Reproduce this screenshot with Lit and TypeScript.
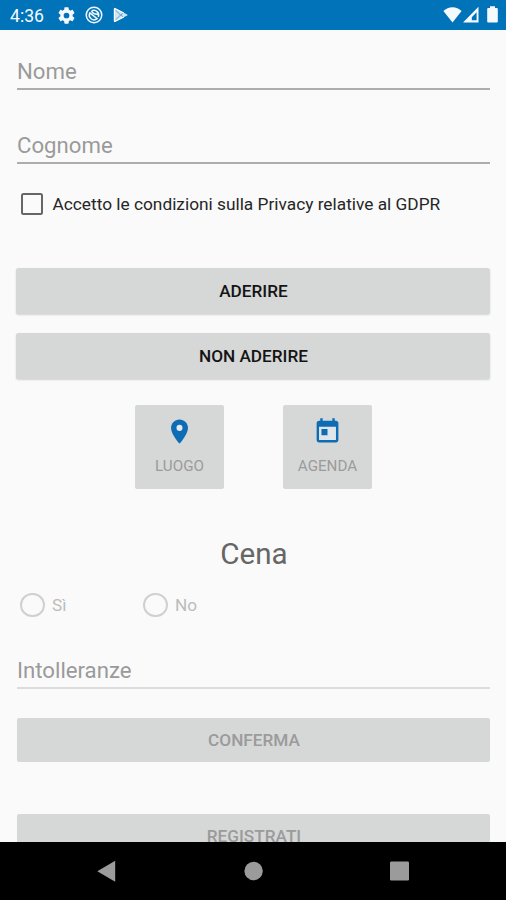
import { LitElement, html, css } from "lit";
import { customElement, property } from "lit/decorators.js";

@customElement("status-bar")
class StatusBar extends LitElement {
  static styles = css`
    :host { display: flex; align-items: center; height: 29.5px; background: #0073b9; color: #f4faff; flex: none; }
    .clock { width: 48px; margin-left: 10px; font-size: 17.6px; line-height: 30px; padding-top: 2px; box-sizing: border-box; white-space: nowrap; font-weight: 400; }
    svg { display: block; flex: none; fill: #f4faff; }
    .gear { width: 17px; height: 17px; margin-top: 1px; }
    .ring { width: 18px; height: 18px; margin: 1px 0 0 9.5px; }
    .play { width: 16px; height: 16px; margin: 1px 0 0 10px; }
    .space { flex: 1; }
    .wifi { width: 19px; height: 17px; }
    .signal { width: 16px; height: 17px; margin-left: 1px; }
    .battery { width: 11px; height: 17px; margin: 0 8px 0 8.5px; }
  `;
  render() {
    return html`
      <span class="clock">4:36</span>
      <svg class="gear" viewBox="1.6 2 20.8 20"><path d="M19.43 12.98c.04-.32.07-.64.07-.98s-.03-.66-.07-.98l2.11-1.65c.19-.15.24-.42.12-.64l-2-3.46c-.12-.22-.39-.3-.61-.22l-2.49 1c-.52-.4-1.08-.73-1.69-.98l-.38-2.65A.49.49 0 0 0 14 2h-4c-.25 0-.46.18-.49.42l-.38 2.65c-.61.25-1.17.59-1.69.98l-2.49-1c-.23-.09-.49 0-.61.22l-2 3.46c-.13.22-.07.49.12.64l2.11 1.65c-.04.32-.07.65-.07.98s.03.66.07.98l-2.11 1.65c-.19.15-.24.42-.12.64l2 3.46c.12.22.39.3.61.22l2.49-1c.52.4 1.08.73 1.69.98l.38 2.65c.03.24.24.42.49.42h4c.25 0 .46-.18.49-.42l.38-2.65c.61-.25 1.17-.59 1.69-.98l2.49 1c.23.09.49 0 .61-.22l2-3.46c.12-.22.07-.49-.12-.64zM12 15.5a3.5 3.5 0 1 1 0-7 3.5 3.5 0 0 1 0 7z"/></svg>
      <svg class="ring" viewBox="0 0 19 19"><g fill="none" stroke="#f4faff" stroke-width="1.6"><circle cx="9.5" cy="9.5" r="8.2"/><path d="M5.2 7.2a5 5 0 0 0 7.6 6.2zM7 5.2a5 5 0 0 1 7 6.3M7 5.2q1.3 3.6 6.6 3.4"/></g></svg>
      <svg class="play" viewBox="0 0 16 17"><path d="M1.2 1.2Q.5 1 .5 2v13q0 1 .8.8L14.6 9q.9-.5 0-1z" opacity=".85"/><path d="M2.3 3.5 7.6 8.5 2.3 13.5M7.6 8.5l3-2.1M7.6 8.5l3 2.1" fill="none" stroke="#0073b9" stroke-width=".6"/><path d="M1 1.6v13.8M1 1.4l10 4.9M1 15.6l10-4.9" fill="none" stroke="#fff" stroke-width="1.2"/></svg>
      <span class="space"></span>
      <svg class="wifi" viewBox="0 0 19 17"><path d="M9.5 16.5.4 5.1Q4.2 1.3 9.5 1.3t9.1 3.8z"/></svg>
      <svg class="signal" viewBox="0 0 16 17"><path fill-rule="evenodd" d="M0 16.5 15.5.8v15.7zM8.8 14.3h4.8V6.2l-4.8 5z"/></svg>
      <svg class="battery" viewBox="0 0 11 17"><path d="M3 .3h5v1.8h1.8q1 0 1 1v12.4q0 1-1 1H1.2q-1 0-1-1V3.1q0-1 1-1H3z"/></svg>
    `;
  }
}

@customElement("text-field")
class TextField extends LitElement {
  @property() label = "";
  @property({ type: Boolean, reflect: true }) disabled = false;
  static styles = css`
    :host { display: block; box-sizing: border-box; height: 37px; margin: 0 16px 0 17px; border-bottom: 2px solid #adadad; font-size: 22.2px; line-height: 36px; color: #9a9a9a; white-space: nowrap; }
    :host([disabled]) { border-color: #dcdcdc; }
  `;
  render() { return html`${this.label}`; }
}

@customElement("form-button")
class FormButton extends LitElement {
  @property({ type: Boolean, reflect: true }) disabled = false;
  static styles = css`
    :host { display: flex; align-items: center; justify-content: center; height: 45.5px; margin: 0 16px; border-radius: 2.5px; background: #d6d7d7; color: #141414; font-size: 17.2px; font-weight: 500; box-shadow: 0 1px 2px rgba(0, 0, 0, .16); white-space: nowrap; }
    :host([disabled]) { height: 44.5px; margin-left: 17px; color: #9b9b9b; box-shadow: none; border-radius: 2px; }
    span { padding: 0 0 0 1px; }
  `;
  render() { return html`<span><slot></slot></span>`; }
}

@customElement("nav-bar")
class NavBar extends LitElement {
  static styles = css`
    :host { display: block; flex: none; height: 58px; background: #000; }
    .keys { display: grid; grid-template-columns: 19px 19px 20px; column-gap: 127.5px; padding: 19px 0 0 96.5px; align-items: center; }
    svg { display: block; fill: #9b9b9b; height: 22px; width: 100%; overflow: visible; }
  `;
  render() {
    return html`<div class="keys">
      <svg viewBox="0 0 19 22"><path d="M.3 10.3 18.2-.2v21z"/></svg>
      <svg viewBox="0 0 19 22"><circle cx="10.6" cy="10" r="9.2"/></svg>
      <svg viewBox="0 0 20 22"><rect x="0" y=".5" width="19" height="19" rx="1.2"/></svg>
    </div>`;
  }
}

@customElement("app-root")
class AppRoot extends LitElement {
  static styles = css`
    :host { display: flex; flex-direction: column; width: 506px; height: 900px; overflow: hidden; background: #fafafa; font-family: Roboto, "Noto Sans", sans-serif; }
    main { flex: 1; min-height: 0; overflow: hidden; padding-top: 23.5px; box-sizing: border-box; }
    .surname { margin-top: 36.5px; }
    .consent { display: flex; align-items: center; height: 24px; margin: 28.5px 0 0 21px; font-size: 17.3px; color: #262626; white-space: nowrap; }
    .box { box-sizing: border-box; width: 22px; height: 22px; border: 2px solid #666; border-radius: 2.5px; margin-right: 9.5px; }
    .join { margin-top: 52px; }
    .decline { margin-top: 19.5px; }
    .tiles { display: flex; justify-content: center; gap: 59px; margin-top: 26px; padding-left: 1px; }
    .tile { box-sizing: border-box; width: 89px; height: 84px; padding-top: 12px; border-radius: 2px; background: #d6d7d7; color: #9b9b9b; display: flex; flex-direction: column; align-items: center; font-size: 15.2px; }
    .tile svg { width: 29px; height: 29px; fill: #0d6cb4; display: block; }
    .tile span { margin-top: 10px; line-height: 20px; }
    h1 { margin: 47.5px 0 0; height: 36px; line-height: 36px; text-align: center; font-size: 29.6px; font-weight: 400; color: #666; padding-left: 2px; }
    .choices { display: grid; grid-template-columns: 123px auto; height: 26px; margin: 20px 0 0 20px; font-size: 17.2px; color: #bcbcbc; }
    .choice { display: flex; align-items: center; gap: 7.5px; }
    .dot { box-sizing: border-box; width: 24.5px; height: 24.5px; border: 2px solid #d0d0d0; border-radius: 50%; }
    .diet { margin-top: 34px; }
    .confirm { margin-top: 28.5px; }
    .register { margin-top: 51.5px; }
  `;
  render() {
    return html`
      <status-bar></status-bar>
      <main>
        <text-field label="Nome"></text-field>
        <text-field class="surname" label="Cognome"></text-field>
        <div class="consent"><span class="box"></span>Accetto le condizioni sulla Privacy relative al GDPR</div>
        <form-button class="join">ADERIRE</form-button>
        <form-button class="decline">NON ADERIRE</form-button>
        <div class="tiles">
          <div class="tile">
            <svg viewBox="0 0 24 24"><path d="M12 2C8.13 2 5 5.13 5 9c0 5.25 7 13 7 13s7-7.75 7-13c0-3.87-3.13-7-7-7z"/><circle cx="12" cy="9" r="2.5" fill="#e2eaf0"/></svg>
            <span>LUOGO</span>
          </div>
          <div class="tile">
            <svg viewBox="0 0 24 24"><path fill="#dfe6eb" d="M4 7h16v13H4z"/><path d="M19 3h-1V1h-2v2H8V1H6v2H5c-1.11 0-1.99.9-1.99 2L3 19c0 1.1.89 2 2 2h14c1.1 0 2-.9 2-2V5c0-1.1-.9-2-2-2zm0 16H5V8h14v11zM7 10h5v5H7z"/></svg>
            <span>AGENDA</span>
          </div>
        </div>
        <h1>Cena</h1>
        <div class="choices">
          <div class="choice"><span class="dot"></span>Sì</div>
          <div class="choice"><span class="dot"></span>No</div>
        </div>
        <text-field class="diet" label="Intolleranze" disabled></text-field>
        <form-button class="confirm" disabled>CONFERMA</form-button>
        <form-button class="register" disabled>REGISTRATI</form-button>
      </main>
      <nav-bar></nav-bar>
    `;
  }
}
